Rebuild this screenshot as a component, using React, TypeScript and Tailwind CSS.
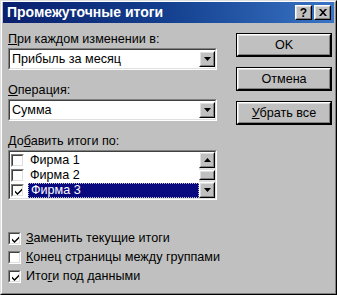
const font = { fontFamily: '"Liberation Sans", Arial, sans-serif' };

const Raised = ({ className = "", children }: { className?: string; children?: React.ReactNode }) => (
  <div className={`border border-t-white border-l-white border-b-black border-r-black ${className}`}>
    <div className="flex h-full w-full items-center justify-center border border-t-[#dfdfdf] border-l-[#dfdfdf] border-b-[#808080] border-r-[#808080] bg-[#c0c0c0]">
      {children}
    </div>
  </div>
);

const Sunken = ({ className = "", children }: { className?: string; children?: React.ReactNode }) => (
  <div className={`border border-t-[#808080] border-l-[#808080] border-b-white border-r-white ${className}`}>
    <div className="h-full w-full border border-t-[#404040] border-l-[#404040] border-b-[#dfdfdf] border-r-[#dfdfdf] bg-white">
      {children}
    </div>
  </div>
);

const Arrow = ({ up = false }: { up?: boolean }) => (
  <svg width="7" height="4" viewBox="0 0 7 4">
    <path d={up ? "M3.5 0 L7 4 L0 4 Z" : "M0 0 L7 0 L3.5 4 Z"} fill="#000" />
  </svg>
);

const Check = () => (
  <svg width="9" height="9" viewBox="0 0 9 9" className="absolute left-[1px] top-[1px]">
    <path d="M1 3.5 L3.5 6 L8 1.5 L8 3.5 L3.5 8 L1 5.5 Z" fill="#000" />
  </svg>
);

const Box = ({ checked = false }: { checked?: boolean }) => (
  <Sunken className="h-[13px] w-[13px] shrink-0">
    <div className="relative h-full w-full">{checked && <Check />}</div>
  </Sunken>
);

const Combo = ({ value }: { value: string }) => (
  <Sunken className="h-[22px] w-[209px]">
    <div className="flex h-full items-center justify-between pl-[2px] pr-0">
      <span className="text-black">{value}</span>
      <Raised className="h-[16px] w-[16px]">
        <Arrow />
      </Raised>
    </div>
  </Sunken>
);

const Button = ({ children }: { children: React.ReactNode }) => (
  <div className="h-[24px] w-[96px] border border-black">
    <Raised className="h-full w-full">
      <span className="text-[12.6px] text-black">{children}</span>
    </Raised>
  </div>
);

const firms = [
  { name: "Фирма 1", checked: false },
  { name: "Фирма 2", checked: false },
  { name: "Фирма 3", checked: true },
];

export default function App() {
  return (
    <div
      style={font}
      className="h-[295px] w-[337px] overflow-hidden border border-t-[#dfdfdf] border-l-[#dfdfdf] border-b-black border-r-black bg-[#c0c0c0]"
    >
      <div className="h-full w-full border border-t-white border-l-white border-b-[#808080] border-r-[#808080] px-[1px]">
        <div className="flex h-[21px] items-center justify-between bg-gradient-to-r from-[#0a1f6e] via-[#14408f] to-[#3a74c4] pl-[4px] pr-[3px]">
          <span className="text-[14px] font-bold text-white">Промежуточные итоги</span>
          <div className="flex gap-[2px]">
            <Raised className="h-[15px] w-[17px]">
              <span className="text-[12px] font-bold leading-none text-black">?</span>
            </Raised>
            <Raised className="h-[15px] w-[17px]">
              <svg width="8" height="7" viewBox="0 0 8 7">
                <path d="M0 0 H2 L4 2.2 L6 0 H8 L5 3.5 L8 7 H6 L4 4.8 L2 7 H0 L3 3.5 Z" fill="#000" />
              </svg>
            </Raised>
          </div>
        </div>

        <div className="flex pl-[5px] pt-[9px] text-[12.6px]">
          <div className="flex w-[209px] flex-col text-black">
            <div className="mb-[1px] leading-[15px]">
              <u>П</u>ри каждом изменении в:
            </div>
            <Combo value="Прибыль за месяц" />
            <div className="mb-[1px] mt-[13px] leading-[15px]">
              <u>О</u>перация:
            </div>
            <Combo value="Сумма" />
            <div className="mb-[1px] mt-[13px] leading-[15px]">
              До<u>б</u>авить итоги по:
            </div>
            <Sunken className="h-[50px] w-[209px]">
              <div className="flex h-full">
                <div className="flex flex-1 flex-col pl-[1px] pt-[1px]">
                  {firms.map((f) => (
                    <div key={f.name} className="flex h-[15px] items-center gap-[4px]">
                      <Box checked={f.checked} />
                      <span
                        className={`flex h-full flex-1 items-center pl-[2px] leading-none ${
                          f.checked ? "border border-dotted border-[#c0c0c0] bg-[#0a0a80] text-white" : ""
                        }`}
                      >
                        {f.name}
                      </span>
                    </div>
                  ))}
                </div>
                <div className="flex w-[16px] flex-col bg-[#e0e0e0]">
                  <Raised className="h-[16px] w-[16px]">
                    <Arrow up />
                  </Raised>
                  <div className="flex flex-1 items-center">
                    <Raised className="h-[10px] w-[16px]" />
                  </div>
                  <Raised className="h-[16px] w-[16px]">
                    <Arrow />
                  </Raised>
                </div>
              </div>
            </Sunken>
            <div className="mt-[31px] flex flex-col gap-[5px]">
              <div className="flex items-center gap-[5px] leading-[14px]">
                <Box checked />
                <span>
                  <u>З</u>аменить текущие итоги
                </span>
              </div>
              <div className="flex items-center gap-[5px] whitespace-nowrap leading-[14px]">
                <Box />
                <span>
                  <u>К</u>онец страницы между группами
                </span>
              </div>
              <div className="flex items-center gap-[5px] leading-[14px]">
                <Box checked />
                <span>
                  Ито<u>г</u>и под данными
                </span>
              </div>
            </div>
          </div>

          <div className="ml-[19px] flex flex-col gap-[10px] pt-[1px]">
            <Button>OK</Button>
            <Button>Отмена</Button>
            <Button>
              <u>У</u>брать все
            </Button>
          </div>
        </div>
      </div>
    </div>
  );
}
